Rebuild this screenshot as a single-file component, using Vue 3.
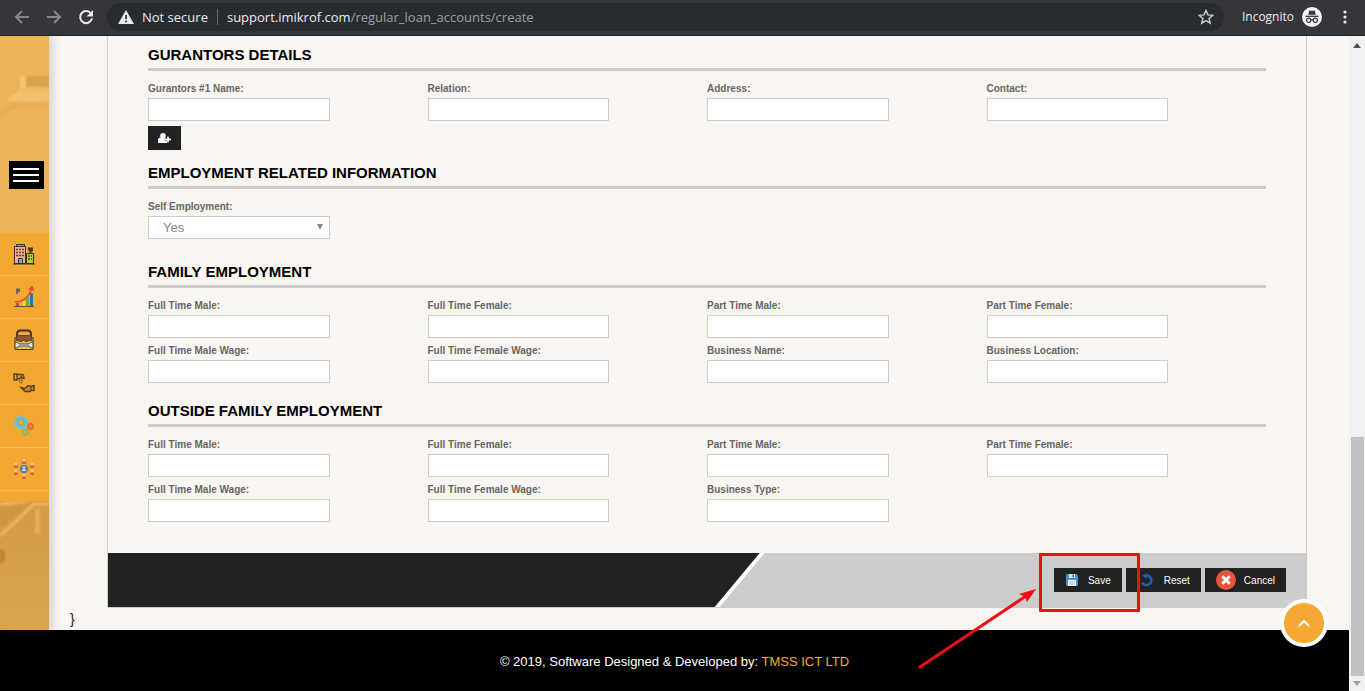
<script setup>
import { reactive, ref } from 'vue'

const guarantorFields = ['Gurantors #1 Name:', 'Relation:', 'Address:', 'Contact:']
const familyFields = [
  'Full Time Male:', 'Full Time Female:', 'Part Time Male:', 'Part Time Female:',
  'Full Time Male Wage:', 'Full Time Female Wage:', 'Business Name:', 'Business Location:',
]
const outsideFields = [
  'Full Time Male:', 'Full Time Female:', 'Part Time Male:', 'Part Time Female:',
  'Full Time Male Wage:', 'Full Time Female Wage:', 'Business Type:',
]
const guarantors = reactive({})
const family = reactive({})
const outside = reactive({})
const selfEmployment = ref('Yes')
const spokes = [[11, 1], [3, 5], [19, 5], [3, 12], [19, 12], [11, 16]]
</script>

<template>
  <div class="browser">
    <header class="toolbar">
      <button class="nav dim" aria-label="Back">
        <svg width="16" height="16" viewBox="0 0 16 16"><path d="M15 8H2M8 2L2 8l6 6" /></svg>
      </button>
      <button class="nav dim" aria-label="Forward">
        <svg width="16" height="16" viewBox="0 0 16 16"><path d="M1 8h13M8 2l6 6-6 6" /></svg>
      </button>
      <button class="nav" aria-label="Reload">
        <svg width="16" height="16" viewBox="0 0 16 16"><path d="M13 4.600A6 6 0 1 0 14 9.400" /><path class="solid" d="M15 1v6.500H8.500z" /></svg>
      </button>
      <div class="omnibox">
        <svg width="16" height="14" viewBox="0 0 16 14"><path d="M8 0l8 14H0z" fill="#e8eaed" /><path d="M8 5v4M8 10.500v1.800" stroke="#292c2f" stroke-width="1.700" /></svg>
        <span class="insecure">Not secure</span>
        <span class="url"><b>support.imikrof.com</b>/regular_loan_accounts/create</span>
        <button class="star" aria-label="Bookmark">
          <svg width="16" height="16" viewBox="0 0 16 16"><path d="M8 1.500l1.900 4.400 4.800.4-3.600 3.200 1.100 4.700L8 11.700l-4.200 2.500 1.100-4.700L1.300 6.300l4.800-.4z" fill="none" stroke="#c6c8ca" stroke-width="1.500" /></svg>
        </button>
      </div>
      <span class="incognito">Incognito</span>
      <svg width="20" height="20" viewBox="0 0 20 20">
        <circle cx="10" cy="10" r="10" fill="#f1f3f4" />
        <path d="M7.300 3.500l2.700.6 2.700-.6 1.100 4.300H6.200z" fill="#35363a" />
        <path d="M3.500 9.300h13" stroke="#35363a" stroke-width="1.300" />
        <g fill="none" stroke="#35363a" stroke-width="1.200"><circle cx="6.700" cy="13.300" r="2.100" /><circle cx="13.300" cy="13.300" r="2.100" /><path d="M8.800 13q1.200-.8 2.400 0" /></g>
      </svg>
      <button class="nav kebab" aria-label="Menu">
        <svg width="4" height="14" viewBox="0 0 4 14"><circle cx="2" cy="2" r="1.600" /><circle cx="2" cy="7" r="1.600" /><circle cx="2" cy="12" r="1.600" /></svg>
      </button>
    </header>

    <div class="window">
      <div class="page">
        <div class="body">
          <aside class="sidebar">
            <div class="photo upper">
              <svg width="49" height="60" viewBox="0 0 49 60">
                <path d="M20 10h6v12h-6z" fill="#f3c57a" /><path d="M26 10h23v11H26z" fill="#d8a44b" />
                <path d="M20 22h29v6H15z" fill="#f2bd66" /><path d="M7 33l8-5h34v7H7z" fill="#f5c370" />
                <path d="M0 44l15-7h34v3H18L0 50z" fill="#e5ad54" />
              </svg>
            </div>
            <div class="photo lower">
              <svg width="49" height="129" viewBox="0 0 49 129">
                <path d="M0 3l28-3M0 35L34 3h15" stroke="#edb862" stroke-width="3" fill="none" />
                <path d="M35 8h5v24h-5z" fill="#e6ae58" /><path d="M40 10h9v19h-9z" fill="#d29b45" /><path d="M0 8l26-4L0 28z" fill="#cf9640" />
                <path d="M0 49q5-1 5 5t-5 10z" fill="#bb812d" />
              </svg>
            </div>
            <button class="burger" aria-label="Toggle menu"><i></i><i></i><i></i></button>
            <nav class="menu">
              <a href="#" aria-label="Office">
                <svg width="22" height="22" viewBox="0 0 22 22">
                  <path d="M3.500 1.500h8v2h-8z" fill="#48b8df" stroke="#333" />
                  <path d="M1.500 3.500h11v17h-11z" fill="#f0b08e" stroke="#3a302b" /><path d="M13.500 10.500h7v10h-7z" fill="#b6c94a" stroke="#333" />
                  <path d="M3 6.500h8M3 9.500h8M3 12.500h8M15 13h4M15 16h4" stroke="#59433c" stroke-width="1.500" stroke-dasharray="2 1" />
                  <path d="M5.500 15.500h4v5h-4z" fill="#48b8df" stroke="#333" /><path d="M17.500 10V8M15 5.500h4v2h-3.500" stroke="#433719" fill="none" stroke-width="1.800" /><path d="M0 21h22" stroke="#333" />
                </svg>
              </a>
              <a href="#" aria-label="Growth">
                <svg width="22" height="22" viewBox="0 0 22 22">
                  <path d="M3 3.500h4M3 5h4M3 7h2" stroke="#6b6753" stroke-width="1.800" />
                  <path d="M10 15h2v5h-2z" fill="#f7e638" /><path d="M13 11h3v9h-3z" fill="#73ab50" /><path d="M17 7h3v13h-3z" fill="#237bab" /><path d="M3 17h3v3H3z" fill="#e54831" />
                  <path d="M2 16c8 0 14-5 17-14M15.500 4L19 1l1.500 4" stroke="#e7472e" stroke-width="1.500" fill="none" /><path d="M1 20.500h20" stroke="#5e5137" />
                </svg>
              </a>
              <a href="#" aria-label="Toolbox">
                <svg width="22" height="22" viewBox="0 0 22 22">
                  <path d="M4 8V5q0-3 3-3.500h8Q18 2 18 5v3" fill="none" stroke="#3d352d" stroke-width="2" /><path d="M7 4h8v4H7z" fill="#e7ad55" />
                  <path d="M2 8.500h18v12H2z" fill="#efb658" stroke="#40372e" /><path d="M4 6.500h14l1 5h-4v1h-3v-1H9v1H6v-1H3z" fill="#8d572b" stroke="#6a4328" />
                  <path d="M2 14l2-1 2 2h10l2-2 2 1v4l-2 1-2-2H6l-2 2-2-1z" fill="#dce5e6" stroke="#55534a" />
                </svg>
              </a>
              <a href="#" aria-label="Loans">
                <svg width="22" height="22" viewBox="0 0 22 22">
                  <path d="M1 2h3v6H1zM4 2.500h6q1 1 1 4H9L8.500 4.500 6 7H4" fill="#d99c42" stroke="#59401b" stroke-width="1.400" /><circle cx="8" cy="9.500" r="1.500" fill="#d8bd48" stroke="#75561e" />
                  <path d="M8 15.500l4 1 3-3 3 1 3-1v5h-3l-1 1h-5z" fill="#bd8447" stroke="#59401b" stroke-width="1.400" /><path d="M18 14v5" stroke="#59401b" />
                </svg>
              </a>
              <a href="#" aria-label="Settings">
                <svg width="22" height="22" viewBox="0 0 22 22">
                  <circle cx="8" cy="7.500" r="6.300" fill="none" stroke="#74c9cc" stroke-width="2" stroke-dasharray="3 1.950" /><circle cx="8" cy="7.500" r="4.500" fill="#f3a832" stroke="#5cc5de" stroke-width="3" /><circle cx="8" cy="7.500" r="3" fill="none" stroke="#a69a70" />
                  <circle cx="17.500" cy="11.500" r="2.300" fill="none" stroke="#ed6a42" stroke-width="2.300" /><circle cx="12" cy="17" r="2.500" fill="none" stroke="#7fbd75" stroke-width="2.200" />
                </svg>
              </a>
              <a href="#" aria-label="Members">
                <svg width="22" height="22" viewBox="0 0 22 22">
                  <g v-for="([x, y], i) in spokes" :key="i" :transform="`translate(${x} ${y})`"><circle cy="1" r="1.500" fill="#f6ce99" /><path d="M-2 2.500h4v2.500h-4z" fill="#ec5b3b" /></g>
                  <circle cx="11" cy="11" r="4.200" fill="#517fac" /><circle cx="11" cy="9.500" r="1.300" fill="#f3d9b1" /><path d="M8.500 13q2.500-4 5 0z" fill="#e5edf0" />
                </svg>
              </a>
            </nav>
          </aside>

          <main class="main">
            <form class="panel" @submit.prevent>
              <div class="fields">
                <section class="group">
                  <h2>GURANTORS DETAILS</h2>
                  <div class="grid">
                    <div v-for="(f, i) in guarantorFields" :key="f" class="field">
                      <label :for="'g' + i">{{ f }}</label>
                      <input :id="'g' + i" v-model="guarantors[f]" type="text" />
                    </div>
                  </div>
                  <button type="button" class="add" aria-label="Add guarantor">
                    <svg width="13" height="10" viewBox="0 0 13 10"><circle cx="5" cy="2.800" r="2.800" /><path d="M0 10V7.500Q0 4.500 2.500 4.500h4Q9 4.500 9 7.500V10z" /><path d="M7 5.500h2v-2h2v2h2v2h-2v2H9v-2H7z" stroke="#222" stroke-width=".3" /></svg>
                  </button>
                </section>

                <section class="group roomy">
                  <h2>EMPLOYMENT RELATED INFORMATION</h2>
                  <div class="grid">
                    <div class="field">
                      <label for="self">Self Employment:</label>
                      <div class="select">
                        <select id="self" v-model="selfEmployment"><option>Yes</option><option>No</option></select>
                        <svg class="caret" width="6" height="6" viewBox="0 0 6 6"><path d="M0 0h6L3 6z" fill="#888" /></svg>
                      </div>
                    </div>
                  </div>
                </section>

                <section class="group">
                  <h2>FAMILY EMPLOYMENT</h2>
                  <div class="grid">
                    <div v-for="(f, i) in familyFields" :key="f" class="field">
                      <label :for="'f' + i">{{ f }}</label>
                      <input :id="'f' + i" v-model="family[f]" type="text" />
                    </div>
                  </div>
                </section>

                <section class="group">
                  <h2>OUTSIDE FAMILY EMPLOYMENT</h2>
                  <div class="grid">
                    <div v-for="(f, i) in outsideFields" :key="f" class="field">
                      <label :for="'o' + i">{{ f }}</label>
                      <input :id="'o' + i" v-model="outside[f]" type="text" />
                    </div>
                  </div>
                </section>
              </div>

              <div class="actions">
                <div class="slant white"></div>
                <div class="slant dark"></div>
                <div class="action-wrap">
                  <button type="submit" class="action save">
                    <svg width="12" height="12" viewBox="0 0 12 12"><path d="M0 1.500Q0 0 1.500 0h9L12 1.500v9q0 1.500-1.500 1.500h-9Q0 12 0 10.500z" fill="#3f94d1" /><path d="M3 0h6v4H3z" fill="#c9e4f3" /><path d="M6.500.5H8v3H6.500z" fill="#2a6da3" /><path d="M2 6h8v6H2z" fill="#f4f6f7" /><path d="M3 8h6M3 10h6" stroke="#a9c6da" /></svg>
                    Save
                  </button>
                  <div class="callout"></div>
                  <svg class="pointer" width="122" height="84" viewBox="0 0 122 84"><path d="M2 81L108 10" stroke="#ee1010" stroke-width="3" stroke-linecap="round" /><path d="M118 3l-9 13-2-5-6-3z" fill="#f00d0d" /></svg>
                </div>
                <button type="reset" class="action reset">
                  <svg width="14" height="14" viewBox="0 0 14 14"><path d="M6 2.600A4.700 4.700 0 1 1 2.400 9.500" fill="none" stroke="#1d61ab" stroke-width="2.500" /><path d="M6.800 0v5.600L2 2.800z" fill="#1d61ab" /></svg>
                  Reset
                </button>
                <button type="button" class="action cancel">
                  <svg width="20" height="20" viewBox="0 0 20 20"><circle cx="10" cy="10" r="10" fill="#e6533c" /><path d="M6.300 6.300l7.400 7.400M13.700 6.300l-7.400 7.400" stroke="#fff" stroke-width="3" /></svg>
                  Cancel
                </button>
              </div>
            </form>
            <p class="stray">}</p>
          </main>
        </div>

        <footer class="footer">
          © 2019, Software Designed &amp; Developed by: <a href="#">TMSS ICT LTD</a>
        </footer>
        <button class="to-top" aria-label="Back to top">
          <svg width="12" height="8" viewBox="0 0 12 8"><path d="M1 7l5-5 5 5" fill="none" stroke="#fff" stroke-width="2" /></svg>
        </button>
      </div>

      <div class="scrollbar">
        <svg width="8" height="5" viewBox="0 0 8 5"><path d="M0 5l4-5 4 5z" fill="#505050" /></svg>
        <div class="thumb"></div>
        <svg width="8" height="5" viewBox="0 0 8 5"><path d="M0 0h8L4 5z" fill="#a0a0a0" /></svg>
      </div>
    </div>
  </div>
</template>

<style>
body { margin: 0; background: #f9f5f0; }
</style>

<style scoped>
* { box-sizing: border-box; }
button { border: 0; padding: 0; background: none; font-family: inherit; cursor: pointer; }
.browser { display: flex; flex-direction: column; min-height: 100vh; font-family: "Liberation Sans", Arial, sans-serif; }

.toolbar { position: relative; z-index: 3; display: flex; align-items: center; height: 36px; padding: 0 18px 2px 14px; background: #35363a; border-bottom: 1px solid #232427; color: #e8eaed; font: 13px "Open Sans", "Noto Sans", sans-serif; }
.nav { display: flex; width: 16px; margin-right: 16px; fill: none; stroke: #e8eaed; stroke-width: 2; }
.nav.dim { stroke: #85878a; }
.nav .solid { fill: #e8eaed; stroke: none; }
.omnibox { display: flex; flex: 1; align-items: center; height: 28px; margin-left: -3px; padding: 0 10px 0 11px; border-radius: 14px; background: #292c2f; }
.insecure { margin-left: 8px; padding-right: 9px; border-right: 1px solid #65686b; line-height: 16px; white-space: nowrap; }
.url { flex: 1; margin-left: 9px; color: #9aa0a6; line-height: 16px; white-space: nowrap; }
.url b { color: #e8eaed; font-weight: 400; }
.star { display: flex; }
.incognito { margin: 0 8px 0 18px; font-size: 12px; }
.nav.kebab { width: 4px; margin: 0 0 0 21px; fill: #e8eaed; stroke: none; }

.window { display: flex; flex: 1; }
.page { position: relative; display: flex; flex: 1; flex-direction: column; min-width: 0; }
.body { display: flex; flex: 1; }

.sidebar { position: relative; width: 49px; padding-top: 125px; background: linear-gradient(#edb459 0, #ecb257 40%, #f0b75e 60%, #d49b42 80%, #dba54b 100%); box-shadow: 2px 0 10px rgba(60, 50, 50, .25); }
.photo { position: absolute; left: 0; display: flex; overflow: hidden; }
.photo svg { filter: blur(1px); }
.upper { top: 30px; }
.lower { bottom: 0; }
.burger { display: flex; position: relative; flex-direction: column; justify-content: center; gap: 4px; width: 35px; height: 28px; margin: 0 0 44px 9px; padding: 0 5px 0 4px; background: #000; }
.burger i { height: 2px; background: #fff; }
.menu { position: relative; padding-bottom: 10px; background: #f3a832; }
.menu a { display: flex; align-items: center; padding-left: 13px; height: 43px; border-bottom: 1px solid #f8bd5d; }

.main { flex: 1; min-width: 0; padding: 0 42px 0 58px; }
.panel { border: 1px solid #ccc; border-top: 0; }
.fields { padding: 9px 40px 13px; }
.group { padding-bottom: 13px; }
.group.roomy { padding-bottom: 18px; }
h2 { margin: 0 0 10px; padding-bottom: 3px; border-bottom: 3px solid #ccc; color: #000; font-size: 15px; font-weight: 700; line-height: 20px; }
.grid { display: grid; grid-template-columns: repeat(4, 1fr); }
.field { padding-bottom: 5px; }
label { display: block; margin-bottom: 1px; color: #666; font-size: 10px; font-weight: 700; line-height: 16px; }
input, select { display: block; width: 65%; height: 23px; padding: 0 14px; border: 1px solid #ccc; border-radius: 0; background: #fff; color: #888; font: 13px "Liberation Sans", Arial, sans-serif; }
.select { position: relative; width: 65%; }
select { width: 100%; appearance: none; }
.caret { position: absolute; top: 8px; right: 7px; pointer-events: none; }
.add { display: flex; align-items: center; justify-content: center; width: 33px; height: 24px; background: #222; fill: #fff; }

.actions { position: relative; display: flex; align-items: center; justify-content: flex-end; gap: 4px; height: 54px; padding-right: 20px; background: #ccc; }
.slant { position: absolute; top: 0; bottom: 0; left: 0; clip-path: polygon(0 0, 100% 0, calc(100% - 45px) 100%, 0 100%); }
.white { width: calc(54.4% + 5px); background: #fff; }
.dark { width: 54.4%; background: #222; }
.action { display: flex; position: relative; align-items: center; height: 24px; background: #222; color: #fff; font-size: 10px; }
.save { padding: 0 11px 0 12px; gap: 10px; }
.reset { padding: 0 11px 0 14px; gap: 10px; }
.cancel { padding: 0 11px; gap: 8px; }
.action-wrap { position: relative; z-index: 2; }
.callout { position: absolute; inset: -15px -18px -20px -15px; border: 3px solid #ee1010; border-radius: 1px; pointer-events: none; }
.pointer { position: absolute; top: 18px; right: 82px; pointer-events: none; }
.stray { margin: 0 0 0 -37px; color: #222; font-size: 14px; line-height: 22px; }

.footer { padding: 21px 0 19px; background: #000; color: #fff; font-size: 13px; line-height: 21px; text-align: center; }
.footer a { color: #f5a833; text-decoration: none; }
.to-top { position: absolute; right: 21px; bottom: 44px; display: flex; align-items: center; justify-content: center; width: 48px; height: 48px; border: 4px solid #fff; border-radius: 50%; background: #f5a833; }

.scrollbar { display: flex; flex-direction: column; align-items: center; width: 16px; padding: 7px 0 5px; background: #f1f1f1; }
.thumb { width: 13px; height: 239px; margin: auto 0 5px; background: #c1c1c1; }
</style>
